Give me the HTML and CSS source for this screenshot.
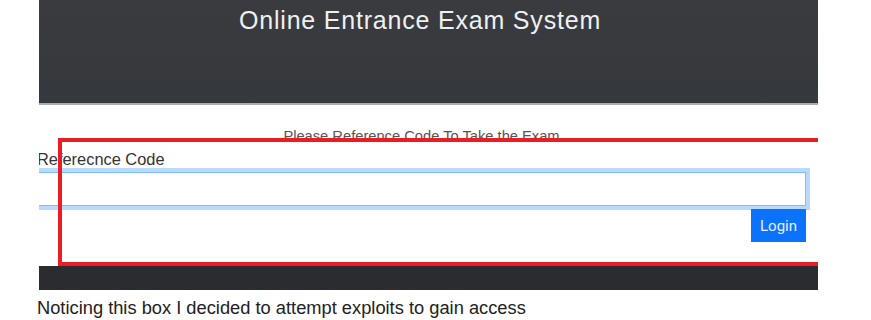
FILE: index.html
```html
<!DOCTYPE html>
<html lang="en">
<head>
  <meta charset="UTF-8" />
  <title>Online Entrance Exam System</title>
  <meta name="viewport" content="width=device-width, initial-scale=1" />
  <link rel="stylesheet" href="styles.css">
</head>
<body>

  <div class="post">
    <!-- screenshot of the exam login page -->
    <div class="shot">
      <div class="page">
        <header class="topbar">
          <h1>Online Entrance Exam System</h1>
        </header>

        <main class="content">
          <p class="hint">Please Reference Code To Take the Exam</p>
          <form class="ref-form">
            <label for="refCode">Referecnce Code</label>
            <input type="text" id="refCode" class="ref-input" />
            <div class="actions">
              <button type="button" class="btn-login">Login</button>
            </div>
          </form>
        </main>

        <footer class="bottombar"></footer>
      </div>

      <!-- red annotation drawn over the screenshot -->
      <div class="highlight"></div>
    </div>

    <p class="caption">Noticing this box I decided to attempt exploits to gain access</p>
  </div>

</body>
</html>
```

FILE: styles.css
```css
/* Reset and base */
* {
  box-sizing: border-box;
  margin: 0;
  padding: 0;
}
body {
  font-family: 'Liberation Sans', Arial, sans-serif;
  background: #fff;
  color: #222;
}

/* Screenshot frame */
.shot {
  position: relative;
  width: 779px;
  margin-left: 39px;
  overflow: hidden;
}
.page {
  width: 796px;
  margin-left: -17px;
  display: flex;
  flex-direction: column;
}

/* Header */
.topbar {
  height: 105px;
  background: linear-gradient(#393b3f, #35383c);
  border-bottom: 2px solid #a9adb1;
  padding-top: 5px;
  text-align: center;
}
.topbar h1 {
  font-weight: 400;
  font-size: 25px;
  letter-spacing: 0.8px;
  line-height: 30px;
  color: #eef0f2;
}

/* Form area */
.content {
  padding: 23px 12px 24px 15px;
}
.hint {
  text-align: center;
  font-size: 14.7px;
  line-height: 17px;
  color: #555;
  margin-bottom: 5px;
}
.ref-form label {
  display: block;
  font-size: 16.4px;
  line-height: 18px;
  color: #333;
  margin-bottom: 4px;
}
.ref-input {
  display: block;
  width: 100%;
  height: 34px;
  border: 1px solid #80bdff;
  box-shadow: 0 0 0 4px rgb(0 123 255 / 0.28);
  outline: none;
  background: #fff;
}
.actions {
  display: flex;
  justify-content: flex-end;
  margin-top: 3px;
}
.btn-login {
  width: 55px;
  height: 33px;
  background: #0a72fd;
  border: 1px solid #0a72fd;
  color: #e8f0ff;
  font-family: Roboto, 'Liberation Sans', sans-serif;
  font-size: 15px;
}

/* Footer */
.bottombar {
  height: 24px;
  background: #2a2c30;
}

/* Annotation box */
.highlight {
  position: absolute;
  left: 19px;
  top: 138px;
  right: -10px;
  height: 128px;
  border: 4px solid #ec1c24;
}

.caption {
  margin: 7px 0 0 37px;
  font-size: 18.3px;
  line-height: 21px;
  color: #222;
}
```
